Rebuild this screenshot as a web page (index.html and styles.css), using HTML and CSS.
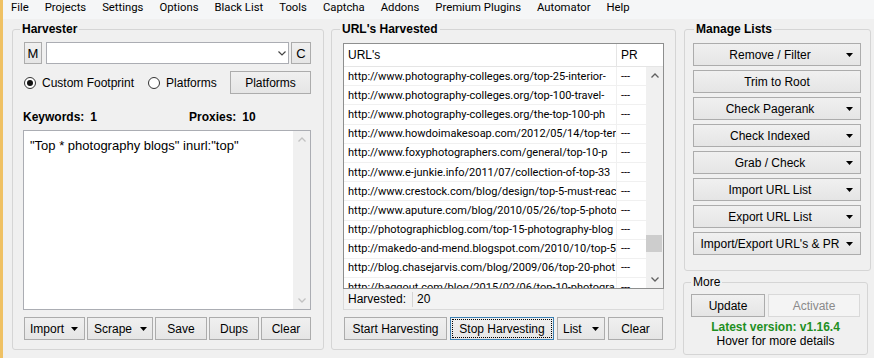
FILE: index.html
```html
<!DOCTYPE html>
<html lang="en">
<head>
    <meta charset="UTF-8">
    <title>Harvester</title>
    <link rel="stylesheet" href="styles.css">
</head>
<body>

    <div class="menu-bar">
        <span class="menu-item">File</span>
        <span class="menu-item">Projects</span>
        <span class="menu-item">Settings</span>
        <span class="menu-item">Options</span>
        <span class="menu-item">Black List</span>
        <span class="menu-item">Tools</span>
        <span class="menu-item">Captcha</span>
        <span class="menu-item">Addons</span>
        <span class="menu-item">Premium Plugins</span>
        <span class="menu-item">Automator</span>
        <span class="menu-item">Help</span>
    </div>

    <div class="main">

        <fieldset class="group harvester">
            <legend>Harvester</legend>
            <div class="footprint-row">
                <button class="btn btn-letter">M</button>
                <div class="combo">
                    <svg width="8" height="5" viewBox="0 0 8 5"><polyline points="0.5,0.5 4,4 7.5,0.5" fill="none" stroke="#444" stroke-width="1.2"/></svg>
                </div>
                <button class="btn btn-letter btn-c">C</button>
            </div>
            <div class="radio-row">
                <label class="radio checked"><span class="radio-mark"></span>Custom Footprint</label>
                <label class="radio"><span class="radio-mark"></span>Platforms</label>
                <button class="btn btn-platforms">Platforms</button>
            </div>
            <div class="stats-row">
                <span class="stat stat-keywords">Keywords:<span class="stat-value">1</span></span>
                <span class="stat">Proxies:<span class="stat-value">10</span></span>
            </div>
            <div class="keywords-box">
                <div class="keywords-text">"Top * photography blogs" inurl:"top"</div>
                <div class="scrollbar scrollbar-disabled">
                    <span class="scroll-arrow"><svg width="8" height="5" viewBox="0 0 8 5"><polyline points="0.5,4.5 4,1 7.5,4.5" fill="none" stroke="currentColor" stroke-width="1.3"/></svg></span>
                    <span class="scroll-track"></span>
                    <span class="scroll-arrow"><svg width="8" height="5" viewBox="0 0 8 5"><polyline points="0.5,0.5 4,4 7.5,0.5" fill="none" stroke="currentColor" stroke-width="1.3"/></svg></span>
                </div>
            </div>
            <div class="button-row harvester-buttons">
                <button class="btn btn-menu btn-import">Import<svg class="caret" width="7" height="4" viewBox="0 0 7 4"><polygon points="0,0 7,0 3.5,4"/></svg></button>
                <button class="btn btn-menu btn-scrape">Scrape<svg class="caret" width="7" height="4" viewBox="0 0 7 4"><polygon points="0,0 7,0 3.5,4"/></svg></button>
                <button class="btn btn-save">Save</button>
                <button class="btn btn-dups">Dups</button>
                <button class="btn btn-clear">Clear</button>
            </div>
        </fieldset>

        <fieldset class="group urls">
            <legend>URL's Harvested</legend>
            <div class="url-list">
                <div class="list-header">
                    <span class="col-url">URL's</span>
                    <span class="col-pr">PR</span>
                </div>
                <div class="list-body">
                    <div class="list-rows">
                        <div class="list-row"><span class="cell-url">http://www.photography-colleges.org/top-25-interior-</span><span class="cell-pr">---</span></div>
                        <div class="list-row"><span class="cell-url">http://www.photography-colleges.org/top-100-travel-</span><span class="cell-pr">---</span></div>
                        <div class="list-row"><span class="cell-url">http://www.photography-colleges.org/the-top-100-ph</span><span class="cell-pr">---</span></div>
                        <div class="list-row"><span class="cell-url">http://www.howdoimakesoap.com/2012/05/14/top-ter</span><span class="cell-pr">---</span></div>
                        <div class="list-row"><span class="cell-url">http://www.foxyphotographers.com/general/top-10-p</span><span class="cell-pr">---</span></div>
                        <div class="list-row"><span class="cell-url">http://www.e-junkie.info/2011/07/collection-of-top-33</span><span class="cell-pr">---</span></div>
                        <div class="list-row"><span class="cell-url">http://www.crestock.com/blog/design/top-5-must-reac</span><span class="cell-pr">---</span></div>
                        <div class="list-row"><span class="cell-url">http://www.aputure.com/blog/2010/05/26/top-5-photo</span><span class="cell-pr">---</span></div>
                        <div class="list-row"><span class="cell-url">http://photographicblog.com/top-15-photography-blog</span><span class="cell-pr">---</span></div>
                        <div class="list-row"><span class="cell-url">http://makedo-and-mend.blogspot.com/2010/10/top-5</span><span class="cell-pr">---</span></div>
                        <div class="list-row"><span class="cell-url">http://blog.chasejarvis.com/blog/2009/06/top-20-phot</span><span class="cell-pr">---</span></div>
                        <div class="list-row"><span class="cell-url">http://baggout.com/blog/2015/02/06/top-10-photogra</span><span class="cell-pr">---</span></div>
                    </div>
                    <div class="scrollbar">
                        <span class="scroll-arrow"><svg width="8" height="5" viewBox="0 0 8 5"><polyline points="0.5,4.5 4,1 7.5,4.5" fill="none" stroke="currentColor" stroke-width="1.3"/></svg></span>
                        <span class="scroll-track"><span class="scroll-thumb"></span></span>
                        <span class="scroll-arrow"><svg width="8" height="5" viewBox="0 0 8 5"><polyline points="0.5,0.5 4,4 7.5,0.5" fill="none" stroke="currentColor" stroke-width="1.3"/></svg></span>
                    </div>
                </div>
            </div>
            <div class="status-bar">
                <span class="status-label">Harvested:</span>
                <span class="status-value">20</span>
            </div>
            <div class="button-row url-buttons">
                <button class="btn btn-start">Start Harvesting</button>
                <button class="btn btn-stop">Stop Harvesting</button>
                <button class="btn btn-menu btn-list">List<svg class="caret" width="7" height="4" viewBox="0 0 7 4"><polygon points="0,0 7,0 3.5,4"/></svg></button>
                <button class="btn btn-clear-urls">Clear</button>
            </div>
        </fieldset>

        <div class="side">
            <fieldset class="group manage">
                <legend>Manage Lists</legend>
                <button class="btn btn-wide"><span class="btn-label">Remove / Filter</span><svg class="caret" width="7" height="4" viewBox="0 0 7 4"><polygon points="0,0 7,0 3.5,4"/></svg></button>
                <button class="btn btn-wide"><span class="btn-label">Trim to Root</span></button>
                <button class="btn btn-wide"><span class="btn-label">Check Pagerank</span><svg class="caret" width="7" height="4" viewBox="0 0 7 4"><polygon points="0,0 7,0 3.5,4"/></svg></button>
                <button class="btn btn-wide"><span class="btn-label">Check Indexed</span><svg class="caret" width="7" height="4" viewBox="0 0 7 4"><polygon points="0,0 7,0 3.5,4"/></svg></button>
                <button class="btn btn-wide"><span class="btn-label">Grab / Check</span><svg class="caret" width="7" height="4" viewBox="0 0 7 4"><polygon points="0,0 7,0 3.5,4"/></svg></button>
                <button class="btn btn-wide"><span class="btn-label">Import URL List</span><svg class="caret" width="7" height="4" viewBox="0 0 7 4"><polygon points="0,0 7,0 3.5,4"/></svg></button>
                <button class="btn btn-wide"><span class="btn-label">Export URL List</span><svg class="caret" width="7" height="4" viewBox="0 0 7 4"><polygon points="0,0 7,0 3.5,4"/></svg></button>
                <button class="btn btn-wide"><span class="btn-label">Import/Export URL's &amp; PR</span><svg class="caret" width="7" height="4" viewBox="0 0 7 4"><polygon points="0,0 7,0 3.5,4"/></svg></button>
            </fieldset>

            <fieldset class="group more">
                <legend>More</legend>
                <div class="more-buttons">
                    <button class="btn btn-update">Update</button>
                    <button class="btn btn-activate" disabled>Activate</button>
                </div>
                <div class="version">Latest version: v1.16.4</div>
                <div class="hover-note">Hover for more details</div>
            </fieldset>
        </div>

    </div>

</body>
</html>
```

FILE: styles.css
```css
* {
    box-sizing: border-box;
}

body {
    margin: 0;
    width: 874px;
    height: 358px;
    overflow: hidden;
    background: #f0f0f0;
    border-left: 3px solid #efc164;
    font-family: "Liberation Sans", Arial, sans-serif;
    font-size: 12px;
    color: #000;
}

/* menu */

.menu-bar {
    display: flex;
    height: 19px;
    background: #f5f6f7;
    font-family: Roboto, "Liberation Sans", sans-serif;
    font-size: 11.3px;
    line-height: 16px;
}

.menu-item {
    padding: 0 8px;
}

.main {
    display: flex;
    align-items: flex-start;
    padding: 3px 0 0 9px;
}

/* group boxes */

.group {
    margin: 0;
    min-width: 0;
    border: 1px solid #d5d5d5;
    border-radius: 3px;
}

.group legend {
    padding: 0 2px;
    font-weight: bold;
    font-size: 12px;
    line-height: 14px;
}

.harvester {
    width: 312px;
    padding: 6px 12px 9px 11px;
}

.harvester legend {
    margin-left: -4px;
}

.urls {
    width: 345px;
    margin-left: 7px;
    padding: 7px 11px 9px 11px;
}

.urls legend {
    margin-left: -3px;
}

.side {
    width: 187px;
    margin-left: 8px;
}

.manage {
    width: 187px;
    padding: 7px 9px 15px 8px;
}

.manage legend {
    margin-left: 1px;
}

.more {
    width: 185px;
    margin-left: -1px;
    margin-top: 4px;
    padding: 5px 7px 6px 7px;
}

.more legend {
    font-weight: normal;
}

/* buttons */

.btn {
    display: flex;
    align-items: center;
    justify-content: center;
    height: 23px;
    margin: 0;
    padding: 0;
    border: 1px solid #acacac;
    border-radius: 0;
    background: linear-gradient(#f0f0f0, #e5e5e5);
    font-family: "Liberation Sans", Arial, sans-serif;
    font-size: 12px;
    color: #000;
    cursor: default;
}

.btn:disabled {
    border-color: #d9d9d9;
    background: #f4f4f4;
    color: #8a8a8a;
}

.caret {
    flex: none;
    fill: #000;
}

.btn-menu {
    justify-content: flex-start;
    padding-left: 5px;
}

.btn-menu .caret {
    margin-left: 7px;
}

/* harvester */

.footprint-row {
    display: flex;
    height: 22px;
}

.btn-letter {
    width: 18px;
    height: 22px;
    font-size: 13px;
}

.btn-c {
    width: 20px;
}

.combo {
    flex: 1;
    display: flex;
    align-items: center;
    justify-content: flex-end;
    margin: 0 2px 0 4px;
    padding-right: 2px;
    background: #fff;
    border: 1px solid #abadb3;
}

.radio-row {
    display: flex;
    align-items: center;
    margin-top: 7px;
    height: 23px;
}

.radio {
    display: flex;
    align-items: center;
}

.radio + .radio {
    margin-left: 14px;
}

.radio-mark {
    display: flex;
    align-items: center;
    justify-content: center;
    width: 12px;
    height: 12px;
    margin-right: 6px;
    border: 1px solid #333;
    border-radius: 50%;
    background: #fff;
}

.radio.checked .radio-mark::after {
    content: "";
    width: 6px;
    height: 6px;
    border-radius: 50%;
    background: #111;
}

.btn-platforms {
    width: 81px;
    margin-left: auto;
}

.stats-row {
    display: flex;
    margin-top: 16px;
    margin-left: -1px;
    font-weight: bold;
    line-height: 14px;
}

.stat-keywords {
    width: 166px;
}

.stat-value {
    margin-left: 6px;
}

.keywords-box {
    display: flex;
    height: 180px;
    margin-top: 6px;
    margin-left: -1px;
    background: #fff;
    border: 1px solid #abadb3;
}

.keywords-text {
    flex: 1;
    padding: 7px 6px;
    font-size: 13px;
    line-height: 15px;
}

.scrollbar {
    display: flex;
    flex-direction: column;
    width: 17px;
    background: #f0f0f0;
    color: #606060;
}

.scrollbar-disabled {
    color: #c2c2c2;
}

.scroll-arrow {
    display: flex;
    align-items: center;
    justify-content: center;
    height: 17px;
}

.scroll-track {
    flex: 1;
}

.scroll-thumb {
    display: block;
    height: 17px;
    margin: 151px 1px 0 0;
    background: #cdcdcd;
}

.button-row {
    display: flex;
    margin-top: 7px;
}

.harvester-buttons {
    gap: 2px;
}

.btn-import {
    width: 61px;
}

.btn-scrape {
    width: 66px;
    padding-left: 6px;
}

.btn-scrape .caret {
    margin-left: 8px;
}

.btn-save {
    width: 52px;
}

.btn-dups {
    width: 50px;
}

.btn-clear {
    flex: 1;
}

/* url list */

.url-list {
    border: 1px solid #8e8f8f;
    background: #fff;
}

.list-header {
    display: flex;
    height: 23px;
    border-bottom: 1px solid #e5e5e5;
}

.col-url {
    display: flex;
    align-items: center;
    width: 273px;
    padding-left: 4px;
    border-right: 1px solid #e5e5e5;
}

.col-pr {
    display: flex;
    align-items: center;
    flex: 1;
    padding-left: 4px;
}

.list-body {
    display: flex;
    height: 221px;
}

.list-rows {
    flex: 1;
    overflow: hidden;
}

.list-row {
    display: flex;
    height: 19.2px;
    border-bottom: 1px solid #f0f0f0;
    font-family: Roboto, "Liberation Sans", sans-serif;
    font-size: 11px;
}

.cell-url {
    display: flex;
    align-items: center;
    flex: none;
    width: 273px;
    padding-left: 4px;
    border-right: 1px solid #f0f0f0;
    overflow: hidden;
    white-space: nowrap;
}

.cell-pr {
    display: flex;
    align-items: center;
    padding-left: 4px;
}

.status-bar {
    display: flex;
    align-items: center;
    height: 21px;
    border: 1px solid #dadada;
    border-top: none;
    background: #f3f3f3;
}

.status-label {
    width: 69px;
    padding-left: 4px;
    border-right: 1px solid #d4d4d4;
    line-height: 15px;
}

.status-value {
    padding-left: 4px;
}

.url-buttons {
    gap: 3px;
    padding-left: 1px;
}

.btn-start {
    width: 103px;
}

.btn-stop {
    width: 104px;
    border-color: #3c7fb1;
    outline: 1px dotted #000;
    outline-offset: -3px;
}

.btn-list {
    width: 48px;
}

.btn-list .caret {
    margin-left: 10px;
}

.btn-clear-urls {
    width: 55px;
}

/* manage lists */

.btn-wide {
    width: 100%;
}

.btn-wide + .btn-wide {
    margin-top: 4px;
}

.btn-label {
    flex: 1;
    text-align: center;
}

.btn-wide .caret {
    margin-right: 7px;
}

/* more */

.more-buttons {
    display: flex;
    gap: 3px;
}

.btn-update {
    width: 74px;
}

.btn-activate {
    width: 92px;
}

.version {
    margin-top: 3px;
    text-align: center;
    font-weight: bold;
    line-height: 14px;
    color: #1f8f1f;
}

.hover-note {
    text-align: center;
    line-height: 14px;
}
```
